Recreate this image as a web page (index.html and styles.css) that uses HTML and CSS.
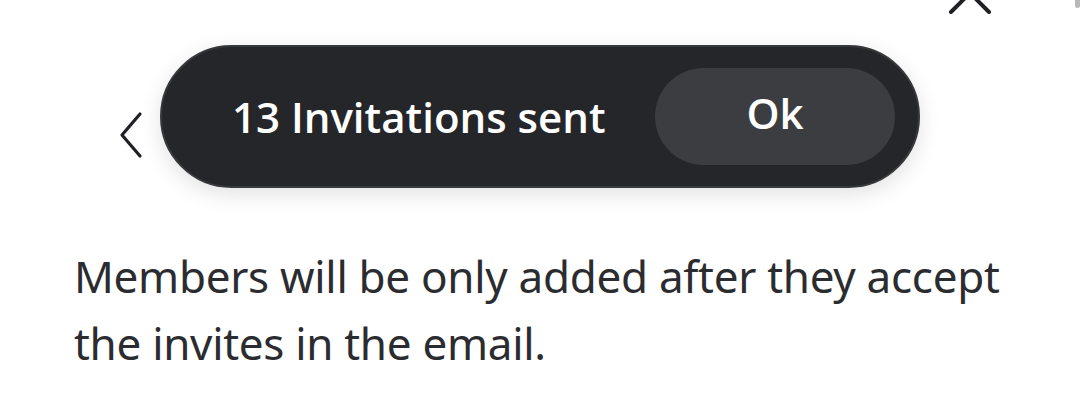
FILE: index.html
```html
<!DOCTYPE html>
<html lang="en">
<head>
<meta charset="utf-8">
<title>Invite members</title>
<link rel="stylesheet" href="styles.css">
</head>
<body>
<div class="sheet">
  <header class="sheet-header">
    <button class="icon-btn back" aria-label="Back">
      <svg width="30" height="48" viewBox="0 0 30 48"><path d="M23 3 L5 24 L23 45" fill="none" stroke="#1f2023" stroke-width="3.2" stroke-linecap="round" stroke-linejoin="round"/></svg>
    </button>
    <button class="icon-btn close" aria-label="Close">
      <svg width="44" height="30" viewBox="0 0 44 30"><path d="M3 28 L41 -10 M41 28 L3 -10" fill="none" stroke="#1f2023" stroke-width="4" stroke-linecap="round"/></svg>
    </button>
  </header>
  <p class="note">Members will be only added after they accept the invites in the email.</p>

  <div class="scroll-thumb"></div>

  <div class="toast" role="status">
    <span class="toast-text">13 Invitations sent</span>
    <button class="toast-btn">Ok</button>
  </div>
</div>
</body>
</html>
```
FILE: styles.css
```css
html, body {
  margin: 0;
  padding: 0;
  background: #ffffff;
}

.sheet {
  position: relative;
  width: 1080px;
  height: 402px;
  overflow: hidden;
  font-family: "Noto Sans", "Open Sans", sans-serif;
}

.sheet-header {
  display: flex;
  justify-content: space-between;
  align-items: flex-start;
  height: 243px;
  padding: 0 88px 0 117px;
}

.icon-btn {
  border: 0;
  background: none;
  padding: 0;
  display: flex;
}

.back {
  margin-top: 111px;
}

.close {
  margin-top: -16px;
}

.note {
  margin: 0;
  padding: 0 50px 0 74px;
  font-size: 44px;
  line-height: 67px;
  letter-spacing: -0.3px;
  color: #2b2c30;
}

/* scrollbar thumb peeking at the top-right edge */
.scroll-thumb {
  position: absolute;
  right: 0;
  top: -6px;
  width: 5px;
  height: 14px;
  border-radius: 3px;
  background: #b8b8ba;
}

.toast {
  position: absolute;
  left: 160px;
  top: 45px;
  width: 760px;
  height: 143px;
  box-sizing: border-box;
  display: flex;
  align-items: center;
  justify-content: space-between;
  padding: 0 23px 0 70px;
  background: #252629;
  border: 2px solid #38393c;
  border-radius: 72px;
  box-shadow: 0 6px 22px rgba(0, 0, 0, 0.12);
}

.toast-text {
  font-family: "Open Sans", "Noto Sans", sans-serif;
  font-weight: 600;
  font-size: 42px;
  color: #ffffff;
}

.toast-btn {
  width: 240px;
  height: 97px;
  border: 0;
  border-radius: 49px;
  background: #3c3d41;
  color: #ffffff;
  font-family: "Open Sans", "Noto Sans", sans-serif;
  font-weight: 600;
  font-size: 42px;
  padding: 0 0 8px;
}
```
